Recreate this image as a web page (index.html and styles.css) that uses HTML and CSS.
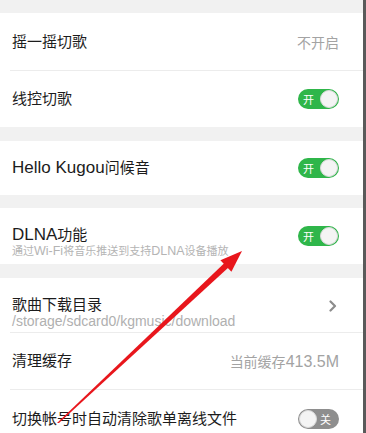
FILE: index.html
```html
<!DOCTYPE html>
<html>
<head>
<meta charset="utf-8">
<link rel="stylesheet" href="styles.css">
</head>
<body>
<div class="screen">
  <div class="gap g13"></div>
  <div class="group">
    <div class="row r57">
      <div class="title">摇一摇切歌</div>
      <div class="value">不开启</div>
    </div>
    <div class="divider"></div>
    <div class="row r56">
      <div class="title">线控切歌</div>
      <div class="toggle on"><span class="lbl">开</span><span class="knob"></span></div>
    </div>
  </div>
  <div class="gap g14"></div>
  <div class="group">
    <div class="row r54">
      <div class="title"><span class="lat">Hello Kugou</span>问候音</div>
      <div class="toggle on"><span class="lbl">开</span><span class="knob"></span></div>
    </div>
  </div>
  <div class="gap g13"></div>
  <div class="group">
    <div class="row r56 top">
      <div class="text">
        <div class="title"><span class="lat">DLNA</span>功能</div>
        <div class="sub">通过<span class="lat">Wi-Fi</span>将音乐推送到支持<span class="lat">DLNA</span>设备播放</div>
      </div>
      <div class="toggle on"><span class="lbl">开</span><span class="knob"></span></div>
    </div>
  </div>
  <div class="gap g14"></div>
  <div class="group">
    <div class="row r54 top">
      <div class="text">
        <div class="title">歌曲下载目录</div>
        <div class="sub path">/storage/sdcard0/kgmusic/download</div>
      </div>
      <svg class="chev" width="8" height="12" viewBox="0 0 8 12"><path d="M1.5 1.5 L6 6 L1.5 10.5" fill="none" stroke="#8c8c8c" stroke-width="2.2" stroke-linecap="round" stroke-linejoin="round"/></svg>
    </div>
    <div class="divider"></div>
    <div class="row r56">
      <div class="title">清理缓存</div>
      <div class="value">当前缓存<span class="lat">413.5M</span></div>
    </div>
    <div class="divider"></div>
    <div class="row r58">
      <div class="title">切换帐号时自动清除歌单离线文件</div>
      <div class="toggle off"><span class="knob"></span><span class="lbl">关</span></div>
    </div>
  </div>
  <svg class="arrow" width="363" height="433" viewBox="0 0 363 433">
    <polygon points="57,423 59,423 229,267 225,262.5" fill="#e8161c"/>
    <polygon points="242,251 231.4,271.8 220.4,260.2" fill="#e8161c"/>
  </svg>
</div>
</body>
</html>
```
FILE: styles.css
```css
html, body {
  margin: 0;
  padding: 0;
  background: #f1f1f1;
}
.screen {
  position: relative;
  width: 363px;
  height: 433px;
  overflow: hidden;
  border-right: 3px solid #5a5a5a;
  background: #f1f1f1;
  font-family: "Liberation Sans", "Noto Sans CJK SC", sans-serif;
}
.gap { background: #f1f1f1; }
.g13 { height: 13px; }
.g14 { height: 14px; }
.group { background: #fff; }
.divider {
  height: 1px;
  margin-left: 10px;
  background: #ececec;
}
.row {
  display: flex;
  align-items: center;
  justify-content: space-between;
  padding: 0 24px 0 12px;
  box-sizing: border-box;
}
.r54 { height: 54px; }
.r56 { height: 56px; }
.r57 { height: 57px; }
.r58 { height: 58px; }
.row.top { align-items: flex-start; padding-top: 18px; }
.row.top .chev { margin-top: 4px; margin-right: 2px; }
.title {
  font-size: 15px;
  line-height: 20px;
  color: #1c1c1c;
}
.title .lat { font-size: 17px; }
.text .title { line-height: 18px; }
.sub {
  font-size: 11px;
  line-height: 14px;
  color: #b4b4b4;
  white-space: nowrap;
}
.sub .lat { font-size: 12.5px; }
.sub.path { font-size: 14px; line-height: 15px; color: #b0b0b0; }
.value {
  font-size: 14px;
  color: #a3a3a3;
}
.value .lat { font-size: 16px; }
.toggle {
  width: 41px;
  height: 20px;
  border-radius: 10px;
  box-sizing: border-box;
  display: flex;
  align-items: center;
  justify-content: space-between;
  padding: 1px;
}
.toggle.on { background: #2fb64a; }
.toggle.off { background: #8e8e8e; }
.toggle .knob {
  width: 18px;
  height: 18px;
  border-radius: 50%;
  background: #f4f4f4;
  box-sizing: border-box;
  border: 1px solid #d8d8d8;
}
.toggle .lbl {
  font-size: 11px;
  line-height: 12px;
  color: #fff;
  font-family: "Noto Sans CJK SC", sans-serif;
  padding-left: 4px;
}
.toggle.off .lbl { padding-left: 0; padding-right: 7px; }
.arrow {
  position: absolute;
  left: 0;
  top: 0;
  pointer-events: none;
}
```
